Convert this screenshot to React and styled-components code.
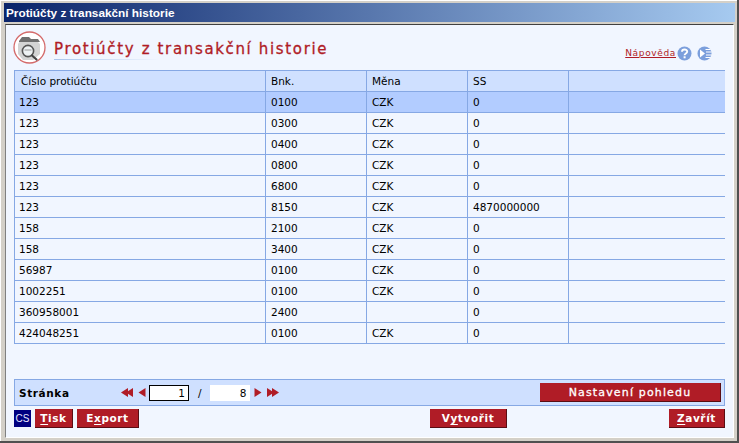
import React from "react";
import styled, { createGlobalStyle } from "styled-components";

const GlobalStyle = createGlobalStyle`
  html, body { margin: 0; padding: 0; background: #d4d0c8; }
  body { font-family: "DejaVu Sans", Verdana, sans-serif; font-size: 10.5px; color: #000; }
`;

const Win = styled.div`
  box-sizing: border-box;
  width: 739px;
  height: 443px;
  display: flex;
  flex-direction: column;
  padding: 3px 2px 0 4px;
  background: #d4d0c8;
  border-right: 2px solid #505050;
  border-bottom: 2px solid #505050;
  box-shadow: inset 1px 1px 0 #fff;
  overflow: hidden;
`;

const TitleBar = styled.div`
  height: 19px;
  flex: none;
  padding-left: 2px;
  display: flex;
  align-items: center;
  color: #fff;
  font-family: "Liberation Sans", Arial, sans-serif;
  font-weight: bold;
  font-size: 11.8px;
  background: linear-gradient(90deg, #0a246a, #a6caf0);
`;

const Body = styled.div`
  flex: 1;
  margin: 2px 1px 3px 1px;
  padding: 0 9px 0 8px;
  display: flex;
  flex-direction: column;
  background: #f1f6ff;
  border-left: 1px solid #808080;
  border-top: 1px solid #404040;
  border-right: 1px solid #fff;
  border-bottom: 1px solid #fff;
`;

const Head = styled.div`
  height: 45px;
  flex: none;
  display: flex;
  align-items: center;
`;

const Emblem = styled.svg`
  width: 33px;
  height: 33px;
  flex: none;
  margin-left: -1px;
  margin-top: -1px;
`;

const HeadText = styled.div`
  margin-left: 8px;
  margin-top: 5px;
  padding-bottom: 2px;
  background: linear-gradient(90deg, #a9c4ec, #f1f6ff 70%) left bottom / 150px 1px no-repeat;
  color: #b01c26;
  font-size: 15px;
  letter-spacing: 1.65px;
  white-space: nowrap;
  -webkit-text-stroke: 0.3px #b01c26;
`;

const HelpBox = styled.div`
  margin-left: auto;
  display: flex;
  align-items: center;
  margin-top: 11px;
  margin-right: 12px;
`;

const HelpLink = styled.a`
  color: #b01c26;
  font-size: 9px;
  letter-spacing: 0.65px;
  text-decoration: underline;
`;

const RoundIcon = styled.svg`
  width: 15px;
  height: 15px;
  margin-left: ${(p) => p.$gap}px;
`;

const Table = styled.table`
  border-collapse: collapse;
  table-layout: fixed;
  width: 710px;
  flex: none;
  border-left: 1px solid #86a8e4;
`;

const Col = styled.col`
  width: ${(p) => p.$w}px;
`;

const HeadRow = styled.tr`
  background: #cfe0ff;
`;

const Row = styled.tr`
  background: ${(p) => (p.$selected ? "#b2ccff" : "#f1f6ff")};
`;

const Cell = styled.td`
  box-sizing: border-box;
  height: 21px;
  padding: 0 0 0 ${(p) => (p.$first ? 4 : 5)}px;
  border-top: 1px solid #86a8e4;
  border-bottom: 1px solid #86a8e4;
  border-right: 1px solid #86a8e4;
  font-size: 10.5px;
  white-space: nowrap;
  overflow: hidden;
  &:last-child { border-right: none; }
`;

const HeadCell = styled(Cell).attrs({ as: "th" })`
  padding-left: ${(p) => (p.$first ? 6 : 5)}px;
  font-weight: normal;
  text-align: left;
`;

const Pager = styled.div`
  box-sizing: border-box;
  width: 711px;
  height: 27px;
  flex: none;
  margin-top: 35px;
  display: flex;
  align-items: center;
  padding: 0 3px 0 4px;
  background: #cfe0ff;
  border: 1px solid #86a8e4;
`;

const PagerLabel = styled.span`
  width: 102px;
  flex: none;
  font-weight: bold;
  font-size: 10.5px;
  letter-spacing: 0.6px;
`;

const Arrow = styled.svg`
  height: 9px;
  width: ${(p) => p.$w}px;
  flex: none;
  margin-left: ${(p) => p.$gap || 0}px;
`;

const PageBox = styled.div`
  box-sizing: border-box;
  width: ${(p) => p.$w}px;
  height: 16px;
  flex: none;
  margin-left: ${(p) => p.$gap}px;
  padding-right: 3px;
  background: #fff;
  border: ${(p) => (p.$active ? "1px solid #000" : "none")};
  text-align: right;
  line-height: ${(p) => (p.$active ? 14 : 16)}px;
  font-size: 10.5px;
`;

const Slash = styled.span`
  margin-left: 9px;
  font-size: 10.5px;
`;

const RedButton = styled.button`
  box-sizing: border-box;
  width: ${(p) => p.$w}px;
  height: 19px;
  flex: none;
  margin-left: ${(p) => p.$gap || 0}px;
  padding: 0;
  background: #b01c26;
  color: #fff;
  border: none;
  border-right: 1px solid #5a0d13;
  border-bottom: 1px solid #5a0d13;
  font-family: "DejaVu Sans", Verdana, sans-serif;
  font-weight: bold;
  font-size: 10.5px;
  letter-spacing: 0.6px;
  u { text-underline-offset: 2px; }
`;

const SettingsButton = styled(RedButton)`
  margin-left: auto;
  font-weight: normal;
  letter-spacing: 1.15px;
  font-size: 11px;
  -webkit-text-stroke: 0.3px #fff;
`;

const CloseButton = styled(RedButton)`
  margin-left: auto;
`;

const Footer = styled.div`
  display: flex;
  align-items: center;
  width: 711px;
  margin-top: 3px;
`;

const LangBadge = styled.div`
  width: 17px;
  height: 17px;
  flex: none;
  background: #000080;
  color: #e8e8ff;
  font-family: "Liberation Sans", Arial, sans-serif;
  font-size: 10px;
  line-height: 17px;
  text-align: center;
`;

const rows = [
  ["123", "0100", "CZK", "0"],
  ["123", "0300", "CZK", "0"],
  ["123", "0400", "CZK", "0"],
  ["123", "0800", "CZK", "0"],
  ["123", "6800", "CZK", "0"],
  ["123", "8150", "CZK", "4870000000"],
  ["158", "2100", "CZK", "0"],
  ["158", "3400", "CZK", "0"],
  ["56987", "0100", "CZK", "0"],
  ["1002251", "0100", "CZK", "0"],
  ["360958001", "2400", "", "0"],
  ["424048251", "0100", "CZK", "0"],
];

const TriLeft = ({ x }) => <polygon points={`${x},4.5 ${x + 7},0 ${x + 7},9`} fill="#b01c26" />;
const TriRight = ({ x }) => <polygon points={`${x},0 ${x + 7},4.5 ${x},9`} fill="#b01c26" />;

const App = () => {
  return (
    <>
      <GlobalStyle />
      <Win>
        <TitleBar>Protiúčty z transakční historie</TitleBar>
        <Body>
          <Head>
            <Emblem viewBox="0 0 33 33">
              <circle cx="16.5" cy="16.5" r="15.5" fill="#fff" stroke="#d46a6a" strokeWidth="1.3" />
              <path d="M5 13 L8 8 H14 L16 10 H24 L27 13 V23 L20 29 H10 L5 23 Z" fill="#d4d4d4" />
              <path d="M6 10 L9 6 H16 L18 8 H25 L27 11 H6 Z" fill="#6f6f6f" />
              <circle cx="15" cy="20" r="5.6" fill="#eef2f4" stroke="#555" strokeWidth="1.6" />
              <path d="M11.5 19h7" stroke="#999" strokeWidth="1" />
              <path d="M19 24.5 L23.5 28.5" stroke="#444" strokeWidth="2.2" strokeLinecap="round" />
            </Emblem>
            <HeadText>Protiúčty z transakční historie</HeadText>
            <HelpBox>
              <HelpLink href="#">Nápověda</HelpLink>
              <RoundIcon viewBox="0 0 15 15" $gap={1}>
                <circle cx="7.5" cy="7.5" r="7" fill="#7c9fdc" />
                <path d="M5 5.8 C5 2.8 10.2 2.8 10.2 5.6 C10.2 7.5 7.6 7.4 7.6 9.2" fill="none" stroke="#fff" strokeWidth="1.9" />
                <rect x="6.6" y="10.3" width="2" height="2" fill="#fff" />
              </RoundIcon>
              <RoundIcon viewBox="0 0 15 15" $gap={5}>
                <circle cx="7.5" cy="7.5" r="7" fill="#7c9fdc" />
                <polygon points="3,3.5 8,7.5 3,11.5" fill="#fff" />
                <path d="M8.5 3.5h5M9 6h5.5M9 9h5.5M8.5 11.5h5" stroke="#fff" strokeWidth="1.2" />
              </RoundIcon>
            </HelpBox>
          </Head>
          <Table>
            <colgroup>
              <Col $w={251} />
              <Col $w={101} />
              <Col $w={101} />
              <Col $w={101} />
              <Col $w={156} />
            </colgroup>
            <thead>
              <HeadRow>
                <HeadCell $first>Číslo protiúčtu</HeadCell>
                <HeadCell>Bnk.</HeadCell>
                <HeadCell>Měna</HeadCell>
                <HeadCell>SS</HeadCell>
                <HeadCell />
              </HeadRow>
            </thead>
            <tbody>
              {rows.map((r, i) => (
                <Row key={i} $selected={i === 0}>
                  <Cell $first>{r[0]}</Cell>
                  <Cell>{r[1]}</Cell>
                  <Cell>{r[2]}</Cell>
                  <Cell>{r[3]}</Cell>
                  <Cell />
                </Row>
              ))}
            </tbody>
          </Table>
          <Pager>
            <PagerLabel>Stránka</PagerLabel>
            <Arrow viewBox="0 0 12 9" $w={12}>
              <TriLeft x={0} />
              <TriLeft x={5} />
            </Arrow>
            <Arrow viewBox="0 0 7 9" $w={8} $gap={5}>
              <TriLeft x={0} />
            </Arrow>
            <PageBox $active $w={40} $gap={3}>1</PageBox>
            <Slash>/</Slash>
            <PageBox $w={40} $gap={8}>8</PageBox>
            <Arrow viewBox="0 0 7 9" $w={8} $gap={4}>
              <TriRight x={0} />
            </Arrow>
            <Arrow viewBox="0 0 12 9" $w={12} $gap={5}>
              <TriRight x={0} />
              <TriRight x={5} />
            </Arrow>
            <SettingsButton $w={181}>Nastavení pohledu</SettingsButton>
          </Pager>
          <Footer>
            <LangBadge>CS</LangBadge>
            <RedButton $w={38} $gap={4}><u>T</u>isk</RedButton>
            <RedButton $w={62} $gap={4}>E<u>x</u>port</RedButton>
            <RedButton $w={77} $gap={291}>V<u>y</u>tvořit</RedButton>
            <CloseButton $w={56}><u>Z</u>avřít</CloseButton>
          </Footer>
        </Body>
      </Win>
    </>
  );
};

export default App;
